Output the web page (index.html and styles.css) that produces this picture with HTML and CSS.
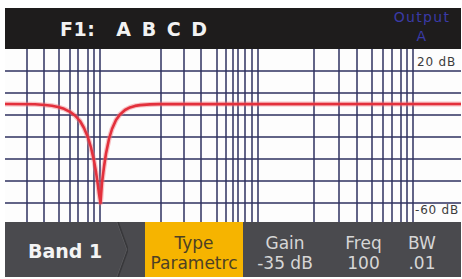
FILE: index.html
```html
<!DOCTYPE html>
<html>
<head>
<meta charset="utf-8">
<link rel="stylesheet" href="styles.css">
</head>
<body>
<div class="screen">
  <div class="header">
    <div class="title"><span>F1:</span><span class="letters">A B C D</span></div>
    <div class="output">Output<br>A</div>
  </div>
  <svg class="graph" width="456" height="173" viewBox="5 49 456 173">
    <rect x="5" y="49" width="456" height="173" fill="#fdfdfd"/>
    <g stroke="#2f3260" stroke-width="1.5" fill="none">
      <path d="M27 49V222M44 49V222M59 49V222M70 49V222M78 49V222M88 49V222M94 49V222M100 49V222M161 49V222M184 49V222M201 49V222M217 49V222M226 49V222M233 49V222M238 49V222M245 49V222M252 49V222M258 49V222M314 49V222M339 49V222M357 49V222M372 49V222M383 49V222M392 49V222M401 49V222M407 49V222M413 49V222"/>
      <path d="M5 71H461M5 93H461M5 115H461M5 137H461M5 159H461M5 181H461M5 203H461"/>
    </g>
    <polyline fill="none" stroke="#f07a80" stroke-width="5" stroke-opacity="0.45" stroke-linejoin="round" points="5,104 35,104.3 45,105 52,105.8 58,107 64,108.8 70,111.8 75,115.5 80,121 84,128 88,137.5 91,147.5 94,160.8 96,172.1 98,185.7 99,193.5 100.5,203 102,182.5 104,166.8 106,153.5 109,139 112,129 116,120 120,114.4 125,110 130,107.4 135,105.9 140,105.1 150,104.4 160,104.1 461,104"/>
    <polyline fill="none" stroke="#e3303c" stroke-width="2.6" stroke-linejoin="round" points="5,104 35,104.3 45,105 52,105.8 58,107 64,108.8 70,111.8 75,115.5 80,121 84,128 88,137.5 91,147.5 94,160.8 96,172.1 98,185.7 99,193.5 100.5,203 102,182.5 104,166.8 106,153.5 109,139 112,129 116,120 120,114.4 125,110 130,107.4 135,105.9 140,105.1 150,104.4 160,104.1 461,104"/>
    <text class="db" x="417" y="65.5">20 dB</text>
    <text class="db" x="415" y="213.5">-60 dB</text>
  </svg>
  <div class="bar">
    <div class="cell band">
      <span class="band-label">Band 1</span>
      <svg class="chev" width="12" height="55" viewBox="0 0 12 55">
        <path d="M1 0L11 27.5L1 55" fill="none" stroke="#5e5e62" stroke-width="1"/>
        <path d="M2 0L12 27.5L2 55" fill="none" stroke="#38383b" stroke-width="1.6"/>
      </svg>
    </div>
    <div class="cell param selected"><span>Type</span><span>Parametrc</span></div>
    <div class="cell param gain"><span>Gain</span><span>-35 dB</span></div>
    <div class="cell param freq"><span>Freq</span><span>100</span></div>
    <div class="cell param bw"><span>BW</span><span>.01</span></div>
  </div>
</div>
</body>
</html>
```

FILE: styles.css
```css
html, body {
  margin: 0;
  padding: 0;
  background: #ffffff;
}

.screen {
  margin: 8px 0 0 5px;
  width: 456px;
}

.header {
  height: 41px;
  background: #1e1c1c;
  display: flex;
  align-items: center;
  padding-left: 55px;
  box-sizing: border-box;
}

.title {
  font-family: "DejaVu Sans", sans-serif;
  font-weight: bold;
  font-size: 19px;
  color: #f2f2f2;
  display: flex;
}

.title span:first-child {
  letter-spacing: 0.5px;
}

.title .letters {
  margin-left: 21px;
  letter-spacing: 2px;
}

.output {
  margin-left: auto;
  margin-right: 9px;
  align-self: flex-start;
  width: 60px;
  text-align: center;
  font-family: "DejaVu Sans", sans-serif;
  font-size: 14px;
  line-height: 19px;
  letter-spacing: 1.3px;
  color: #3a3aa6;
}

.graph {
  display: block;
}

.db {
  font-family: "DejaVu Sans", sans-serif;
  font-size: 12px;
  letter-spacing: 0.8px;
  fill: #3c3c3c;
}

.bar {
  height: 55px;
  background: #4a4a4e;
  display: flex;
}

.cell {
  box-sizing: border-box;
  height: 55px;
}

.band {
  width: 140px;
  display: flex;
  align-items: center;
  padding-left: 23px;
}

.band-label {
  font-family: "DejaVu Sans", sans-serif;
  font-weight: bold;
  font-size: 19px;
  color: #f4f4f4;
  padding-top: 3px;
}

.chev {
  display: block;
  margin-left: auto;
  margin-right: 17px;
}

.param {
  display: flex;
  flex-direction: column;
  align-items: center;
  justify-content: center;
  padding-top: 6px;
  font-family: "DejaVu Sans", sans-serif;
  font-size: 17px;
  line-height: 20px;
  color: #d6d6d6;
  white-space: nowrap;
}

.selected {
  width: 98px;
  background: #f6b400;
  color: #4d4124;
}

.gain {
  width: 84px;
}

.freq {
  width: 73px;
}

.bw {
  width: 44px;
}
```
